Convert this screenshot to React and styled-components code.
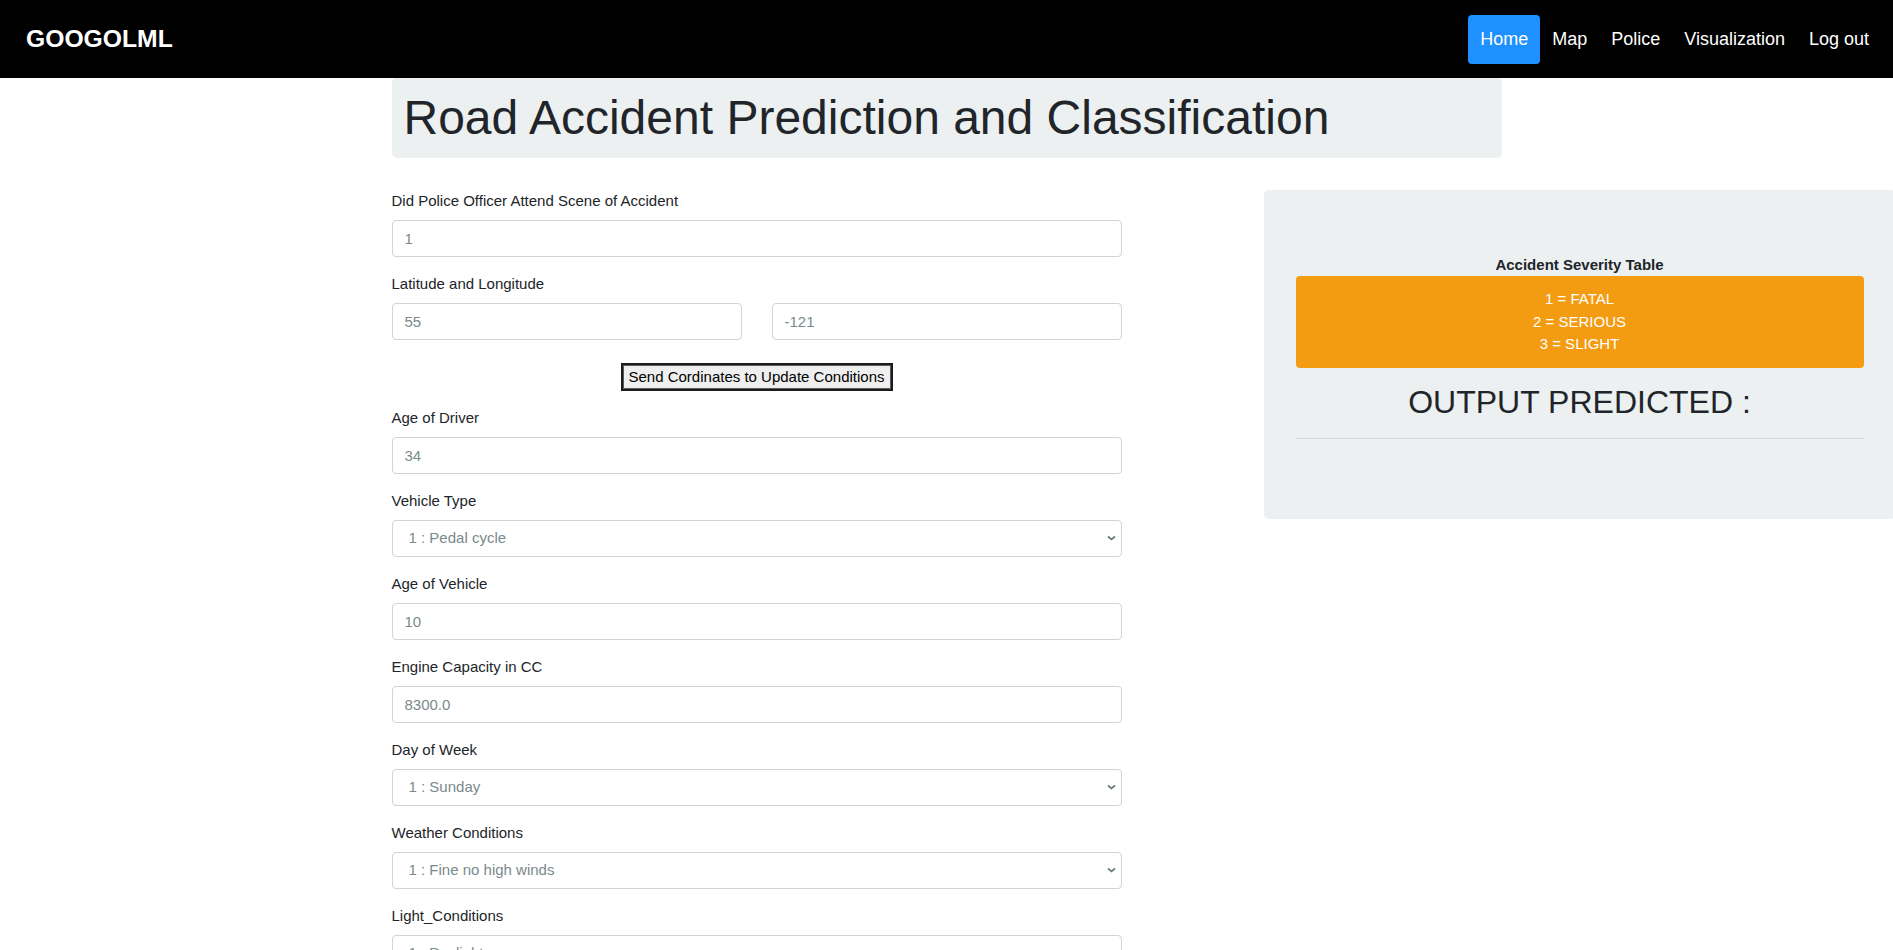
import React from "react";
import styled, { createGlobalStyle } from "styled-components";

const GlobalStyle = createGlobalStyle`
  html {
    scrollbar-width: none;
  }
  html::-webkit-scrollbar, body::-webkit-scrollbar {
    display: none;
  }
  body {
    margin: 0;
    background: #ffffff;
    color: #212529;
    font-family: "Liberation Sans", Arial, sans-serif;
    font-size: 15px;
    line-height: 1.5;
  }
  * {
    box-sizing: border-box;
  }
`;

const Page = styled.div`
  width: 100%;
  overflow-x: hidden;
`;

const Navbar = styled.nav`
  height: 78px;
  background: #000000;
  display: flex;
  align-items: center;
  justify-content: space-between;
  padding: 0 12px 0 26px;
`;

const Brand = styled.a`
  color: #ffffff;
  font-size: 24.7px;
  font-weight: 700;
  line-height: 1;
  text-decoration: none;
`;

const NavList = styled.ul`
  display: flex;
  align-items: center;
  list-style: none;
  margin: 0;
  padding: 0;
`;

const NavLink = styled.a`
  display: block;
  padding: 11px 12px;
  font-size: 18px;
  line-height: 27px;
  color: #ffffff;
  text-decoration: none;
  border-radius: 4px;
  background: ${(p) => (p.$active ? "#1e90ff" : "transparent")};
`;

const Container = styled.main`
  width: 1110px;
  margin: 0 auto;
`;

const Jumbotron = styled.header`
  background: #ecf0f1;
  border-radius: 5px;
  padding: 11px 12px;
  margin-bottom: 32px;
`;

const Title = styled.h1`
  margin: 0;
  font-size: 48px;
  font-weight: 400;
  line-height: 1.2;
  color: #212529;
`;

const ContentRow = styled.div`
  display: flex;
  align-items: flex-start;
`;

const FormColumn = styled.form`
  width: 730px;
  flex-shrink: 0;
`;

const FormGroup = styled.div`
  margin-bottom: 16px;
`;

const Label = styled.label`
  display: block;
  margin-bottom: 8px;
  font-size: 15px;
  line-height: 22.5px;
  color: #212529;
`;

const TextInput = styled.input`
  display: block;
  width: 100%;
  height: 36.5px;
  padding: 6px 12px;
  font-family: inherit;
  font-size: 15px;
  line-height: 22.5px;
  color: #7b8a8b;
  background: #ffffff;
  border: 1px solid #ced4da;
  border-radius: 4px;
  outline: none;
`;

const InputPair = styled.div`
  display: grid;
  grid-template-columns: 1fr 1fr;
  column-gap: 30px;
`;

const SelectWrap = styled.div`
  position: relative;
`;

const Select = styled.select`
  display: block;
  width: 100%;
  height: 36.5px;
  padding: 6px 28px 6px 12px;
  font-family: inherit;
  font-size: 15px;
  line-height: 22.5px;
  color: #7b8a8b;
  background: #ffffff;
  border: 1px solid #ced4da;
  border-radius: 4px;
  appearance: none;
  -webkit-appearance: none;
  outline: none;
  text-indent: 4px;
`;

const Chevron = styled.svg`
  position: absolute;
  right: 6px;
  top: 50%;
  width: 9px;
  height: 6px;
  margin-top: -3px;
  pointer-events: none;
`;

const ButtonRow = styled.div`
  display: flex;
  justify-content: center;
  padding-top: 7px;
  margin-bottom: 16px;
`;

const PlainButton = styled.button`
  display: block;
  height: 28px;
  padding: 3px 6px;
  font-family: inherit;
  font-size: 15px;
  line-height: 18px;
  color: #000000;
  background: #efefef;
  border: 2px solid #1c1c1c;
  border-radius: 0;
  box-shadow: inset 0 0 0 1px #5a5a5a;
`;

const ResultPanel = styled.aside`
  flex-shrink: 0;
  width: 632px;
  margin-left: 142px;
  padding: 64px 32px 64px;
  background: #ecf0f1;
  border-radius: 5px;
`;

const TableTitle = styled.div`
  text-align: center;
  font-size: 15px;
  font-weight: 700;
  line-height: 22.5px;
  color: #212529;
`;

const SeverityBox = styled.div`
  background: #f39c12;
  color: #ffffff;
  text-align: center;
  border-radius: 4px;
  padding: 12px;
  margin-bottom: 15px;
`;

const SeverityLine = styled.div`
  font-size: 15px;
  line-height: 22.5px;
`;

const OutputHeading = styled.h3`
  margin: 0;
  text-align: center;
  font-size: 32px;
  font-weight: 400;
  line-height: 1.2;
  color: #212529;
`;

const Divider = styled.hr`
  margin: 17px 0 16px;
  border: 0;
  border-top: 1px solid rgba(0, 0, 0, 0.1);
`;

const ChevronIcon = () => (
  <Chevron viewBox="0 0 9 6">
    <polyline
      points="1,1.5 4.5,4.5 8,1.5"
      fill="none"
      stroke="#6b7a7b"
      strokeWidth="1.7"
    />
  </Chevron>
);

const TextField = ({ label, value }) => (
  <FormGroup>
    <Label>{label}</Label>
    <TextInput type="text" defaultValue={value} />
  </FormGroup>
);

const SelectField = ({ label, options }) => (
  <FormGroup>
    <Label>{label}</Label>
    <SelectWrap>
      <Select defaultValue={options[0]}>
        {options.map((o) => (
          <option key={o} value={o}>
            {o}
          </option>
        ))}
      </Select>
      <ChevronIcon />
    </SelectWrap>
  </FormGroup>
);

const navItems = ["Home", "Map", "Police", "Visualization", "Log out"];

export default function App() {
  return (
    <Page>
      <GlobalStyle />
      <Navbar>
        <Brand href="#">GOOGOLML</Brand>
        <NavList>
          {navItems.map((item) => (
            <li key={item}>
              <NavLink href="#" $active={item === "Home"}>
                {item}
              </NavLink>
            </li>
          ))}
        </NavList>
      </Navbar>

      <Container>
        <Jumbotron>
          <Title>Road Accident Prediction and Classification</Title>
        </Jumbotron>

        <ContentRow>
          <FormColumn onSubmit={(e) => e.preventDefault()}>
            <TextField label="Did Police Officer Attend Scene of Accident" value="1" />

            <FormGroup>
              <Label>Latitude and Longitude</Label>
              <InputPair>
                <TextInput type="text" defaultValue="55" />
                <TextInput type="text" defaultValue="-121" />
              </InputPair>
            </FormGroup>

            <ButtonRow>
              <PlainButton type="button">Send Cordinates to Update Conditions</PlainButton>
            </ButtonRow>

            <TextField label="Age of Driver" value="34" />
            <SelectField
              label="Vehicle Type"
              options={["1 : Pedal cycle", "2 : Motorcycle 50cc and under", "3 : Motorcycle 125cc and under", "9 : Car"]}
            />
            <TextField label="Age of Vehicle" value="10" />
            <TextField label="Engine Capacity in CC" value="8300.0" />
            <SelectField
              label="Day of Week"
              options={["1 : Sunday", "2 : Monday", "3 : Tuesday", "4 : Wednesday", "5 : Thursday", "6 : Friday", "7 : Saturday"]}
            />
            <SelectField
              label="Weather Conditions"
              options={["1 : Fine no high winds", "2 : Raining no high winds", "3 : Snowing no high winds"]}
            />
            <SelectField
              label="Light_Conditions"
              options={["1 : Daylight", "4 : Darkness - lights lit", "5 : Darkness - lights unlit"]}
            />
            <SelectField
              label="Road_Surface_Conditions"
              options={["1 : Dry", "2 : Wet or damp", "3 : Snow"]}
            />
          </FormColumn>

          <ResultPanel>
            <TableTitle>Accident Severity Table</TableTitle>
            <SeverityBox>
              <SeverityLine>1 = FATAL</SeverityLine>
              <SeverityLine>2 = SERIOUS</SeverityLine>
              <SeverityLine>3 = SLIGHT</SeverityLine>
            </SeverityBox>
            <OutputHeading>OUTPUT PREDICTED :</OutputHeading>
            <Divider />
          </ResultPanel>
        </ContentRow>
      </Container>
    </Page>
  );
}
